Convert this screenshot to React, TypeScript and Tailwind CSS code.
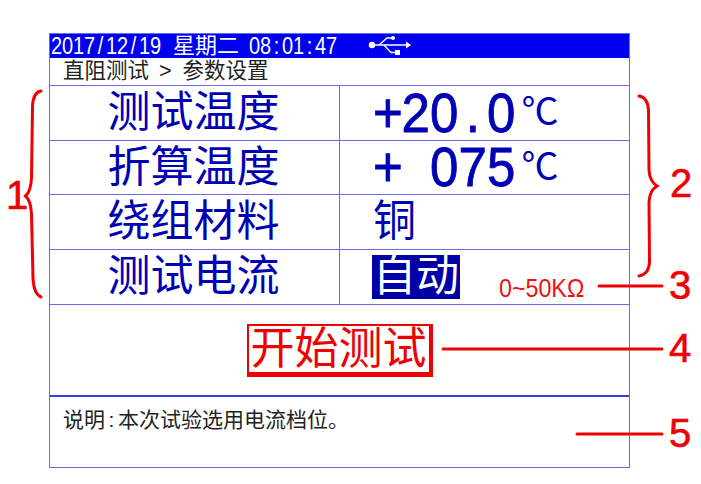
const sans = "font-['Liberation_Sans','Noto_Sans_CJK_SC',sans-serif]";
const number = `absolute text-[40px] leading-[46px] text-[#f00000] [-webkit-text-stroke:0.6px_#f00000] ${sans}`;

const rows = [
  { label: "测试温度", chars: "+20.0", unit: "℃" },
  { label: "折算温度", chars: "+ 075", unit: "℃" },
  { label: "绕组材料", text: "铜" },
  { label: "测试电流", highlight: "自动" },
];

function Digits({ value }: { value: string }) {
  return (
    <span className="inline-flex scale-y-[1.15] text-[20px] leading-none">
      {value.split("").map((c, i) => (
        <span key={i} className="inline-block w-[11px] text-center">
          {c}
        </span>
      ))}
    </span>
  );
}

function UsbIcon() {
  return (
    <svg width="46" height="25" viewBox="0 0 46 25" className="ml-[30px] shrink-0 text-white" fill="none">
      <circle cx="5" cy="11" r="3.2" fill="currentColor" />
      <path d="M5 11H41" stroke="currentColor" strokeWidth="1.5" />
      <path d="M39 7.5L44 11L39 14.5Z" fill="currentColor" />
      <path d="M12 11L20 4H25" stroke="currentColor" strokeWidth="1.3" />
      <circle cx="26" cy="4" r="2" fill="currentColor" />
      <path d="M17 11L24 18.5H29" stroke="currentColor" strokeWidth="1.3" />
      <rect x="28" y="16" width="5" height="5" fill="currentColor" />
    </svg>
  );
}

function Annotations() {
  return (
    <>
      <svg width="701" height="484" viewBox="0 0 701 484" fill="none" className="absolute left-0 top-0">
        <g stroke="#f00000" strokeWidth="3" strokeLinecap="round">
          <path d="M41 91C35 92 33 97 32.5 106L31.5 178C31 188 29 193 25.5 196C29 199 31 204 31.5 214L33 278C33.5 289 36 295 41 297" />
          <path d="M639 96C645 97 648 101 648.5 110L649 170C649.5 179 652 183 657 186C652 189 649.5 193 649 202L649.5 262C649 271 645 275 639 276" />
          <path d="M599 286H662" />
          <path d="M443 349H662" />
          <path d="M577 434H662" />
        </g>
      </svg>
      <span className={`${number} left-[6px] top-[172px]`}>1</span>
      <span className={`${number} left-[670px] top-[160px]`}>2</span>
      <span className={`${number} left-[669px] top-[262px]`}>3</span>
      <span className={`${number} left-[669px] top-[325px]`}>4</span>
      <span className={`${number} left-[669px] top-[410px]`}>5</span>
    </>
  );
}

export default function App() {
  return (
    <div className={`relative h-[484px] w-[701px] overflow-hidden bg-white pl-[49px] pt-[33px] ${sans}`}>
      <div className="flex h-[435px] w-[581px] flex-col border border-[#6a6af0]">
        {/* status bar */}
        <div className="flex h-[24px] shrink-0 items-center bg-[#0000f0] pl-[1px] text-white">
          <Digits value="2017/12/19" />
          <span className="ml-[12px] text-[22px] leading-none">星期二</span>
          <span className="ml-[10px] flex">
            <Digits value="08:01:47" />
          </span>
          <UsbIcon />
        </div>

        <div className="flex h-[27px] shrink-0 items-center pl-[13px] text-[21.5px] text-[#222]">
          <span>直阻测试</span>
          <span className="ml-[10px]">&gt;</span>
          <span className="ml-[11px]">参数设置</span>
        </div>

        <div className="shrink-0 border-t border-[#6a6af0]">
          {rows.map((row) => (
            <div key={row.label} className="flex h-[54.5px] border-b border-[#6a6af0] text-[#0000b4] last:h-[55.5px]">
              <div className="flex w-[290px] items-center justify-center border-r border-[#6a6af0] pr-[2px] text-[43px] leading-none">
                {row.label}
              </div>
              <div className="relative flex flex-1 items-center pl-[33px]">
                {row.chars && (
                  <>
                    <span className="flex h-[42px] scale-y-[1.1] items-center [-webkit-text-stroke:0.8px_#0000b4]">
                      {row.chars.split("").map((c, i) => (
                        <span key={i} className="inline-block w-[28.5px] text-center text-[51px] leading-[42px]">
                          {c === " " ? "\u00a0" : c}
                        </span>
                      ))}
                    </span>
                    <span className="ml-[6px] text-[37px] leading-none">{row.unit}</span>
                  </>
                )}
                {row.text && <span className="text-[43px] leading-none">{row.text}</span>}
                {row.highlight && (
                  <>
                    <span className="-ml-[1px] flex h-[44px] w-[88px] items-center justify-center bg-[#0000a8] text-[43px] leading-none text-white">
                      {row.highlight}
                    </span>
                    <span className="absolute left-[159px] top-[25px] origin-left scale-x-[0.93] text-[25px] leading-[26px] whitespace-nowrap text-[#f01010]">
                      0~50KΩ
                    </span>
                  </>
                )}
              </div>
            </div>
          ))}
        </div>

        <div className="flex h-[92px] shrink-0 items-start justify-center border-b-2 border-[#3a3ae6] pt-[19px]">
          <button className="flex h-[53px] w-[186px] items-center justify-center border-2 border-b-[5px] border-r-[4px] border-[#f00000] text-[44px] leading-none text-[#f00000]">
            开始测试
          </button>
        </div>

        <div className="flex items-center pl-[13px] pt-[9px] text-[21px] leading-[28px] text-[#222]">
          <span>说明</span>
          <span className="inline-block w-[13px] text-center">:</span>
          <span>本次试验选用电流档位。</span>
        </div>
      </div>
      <Annotations />
    </div>
  );
}
